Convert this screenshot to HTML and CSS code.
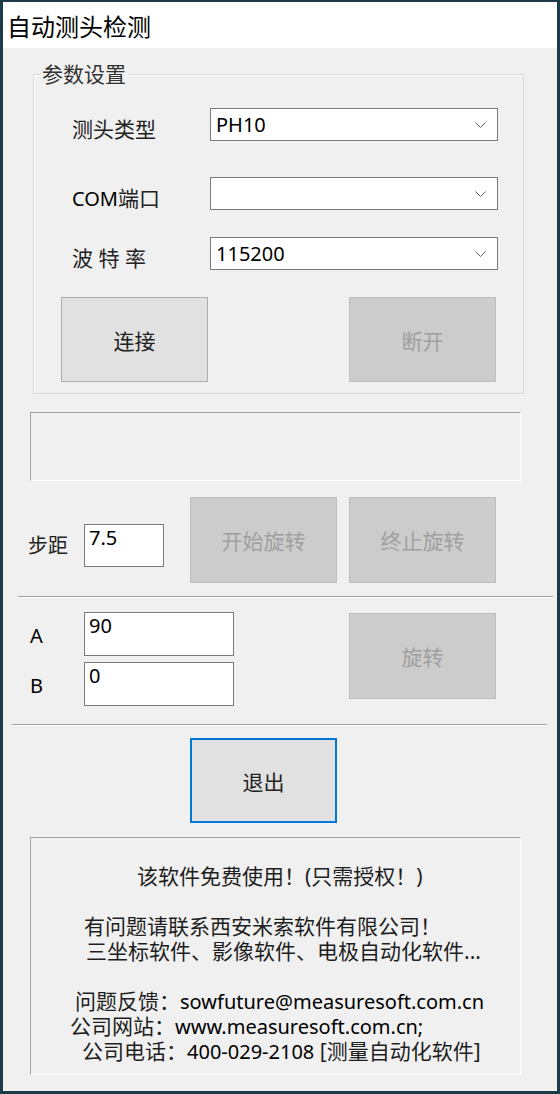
FILE: index.html
```html
<!DOCTYPE html>
<html lang="zh-CN">
<head>
    <meta charset="UTF-8">
    <meta name="viewport" content="width=device-width, initial-scale=1.0">
    <title>自动测头检测</title>
    <link rel="stylesheet" href="styles.css">
</head>
<body>
    <div class="window">
        <div class="titlebar">自动测头检测</div>

        <div class="client">
            <fieldset class="group">
                <legend>参数设置</legend>

                <div class="field-row row-type">
                    <label>测头类型</label>
                    <div class="combo">
                        <span>PH10</span>
                        <svg class="chevron" width="11" height="6" viewBox="0 0 11 6"><polyline points="0.5,0.5 5.5,5.5 10.5,0.5" /></svg>
                    </div>
                </div>

                <div class="field-row row-com">
                    <label><span class="latin">COM</span>端口</label>
                    <div class="combo">
                        <span></span>
                        <svg class="chevron" width="11" height="6" viewBox="0 0 11 6"><polyline points="0.5,0.5 5.5,5.5 10.5,0.5" /></svg>
                    </div>
                </div>

                <div class="field-row row-baud">
                    <label>波 特 率</label>
                    <div class="combo">
                        <span>115200</span>
                        <svg class="chevron" width="11" height="6" viewBox="0 0 11 6"><polyline points="0.5,0.5 5.5,5.5 10.5,0.5" /></svg>
                    </div>
                </div>

                <div class="btn-row">
                    <button class="btn" id="connectButton">连接</button>
                    <button class="btn btn-disconnect" id="disconnectButton" disabled>断开</button>
                </div>
            </fieldset>

            <div class="panel status-panel"></div>

            <div class="step-row">
                <label class="step-label">步距</label>
                <div class="textbox step-box">7.5</div>
                <button class="btn btn-start" disabled>开始旋转</button>
                <button class="btn btn-stop" disabled>终止旋转</button>
            </div>

            <hr class="sep sep-top">

            <div class="angle-row">
                <div class="angle-fields">
                    <div class="angle-field">
                        <label>A</label>
                        <div class="textbox angle-box">90</div>
                    </div>
                    <div class="angle-field">
                        <label>B</label>
                        <div class="textbox angle-box">0</div>
                    </div>
                </div>
                <button class="btn btn-rotate" disabled>旋转</button>
            </div>

            <hr class="sep sep-bottom">

            <button class="btn btn-default" id="exitButton">退出</button>

            <div class="panel info-panel">
                <div class="line l1">该软件免费使用！(只需授权！)</div>
                <div class="line blank"></div>
                <div class="line l2">有问题请联系西安米索软件有限公司！</div>
                <div class="line l3">三坐标软件、影像软件、电极自动化软件...</div>
                <div class="line blank"></div>
                <div class="line l5">问题反馈：<span class="latin">sowfuture@measuresoft.com.cn</span></div>
                <div class="line l6">公司网站：<span class="latin">www.measuresoft.com.cn;</span></div>
                <div class="line l7">公司电话：<span class="latin">400-029-2108</span> [测量自动化软件]</div>
            </div>
        </div>
    </div>
</body>
</html>
```

FILE: styles.css
```css
* {
    box-sizing: border-box;
}

body {
    margin: 0;
    padding: 0;
    background-color: #1c3c4a;
    font-family: "Noto Sans", "Noto Sans CJK SC", sans-serif;
    font-size: 21px;
    color: #222;
}

.window {
    width: 560px;
    height: 1094px;
    border-style: solid;
    border-color: #1c3c4a;
    border-width: 2px 3px 3px 3px;
    display: flex;
    flex-direction: column;
}

.titlebar {
    height: 46px;
    background-color: #fff;
    display: flex;
    align-items: center;
    padding-left: 4px;
    font-family: "Noto Sans CJK SC", sans-serif;
    font-size: 24px;
    color: #000;
}

.client {
    flex: 1;
    background-color: #f0f0f0;
    overflow: hidden;
}

.latin {
    font-size: 20px;
    color: #000;
}

/* 参数设置 */
.group {
    margin: 15px 0 0 30px;
    width: 491px;
    padding: 0;
    border: 1px solid #d9d9d9;
    box-shadow: inset 1px 1px 0 #fff;
}

.group legend {
    margin-left: 6px;
    padding: 0 2px;
    line-height: 22px;
    color: #333;
}

.field-row {
    display: flex;
    align-items: flex-start;
    margin-left: 38px;
}

.field-row label {
    width: 138px;
    margin-top: 10px;
    line-height: 22px;
}

.row-type {
    margin-top: 23px;
}

.row-com {
    margin-top: 36px;
}

.row-baud {
    margin-top: 27px;
}

.combo {
    width: 288px;
    height: 33px;
    background-color: #fff;
    border: 1px solid #7a7a7a;
    display: flex;
    align-items: center;
    justify-content: space-between;
    padding: 0 11px 0 5px;
    font-size: 20px;
    color: #000;
}

.chevron polyline {
    fill: none;
    stroke: #606060;
    stroke-width: 1;
}

.btn-row {
    display: flex;
    margin: 27px 0 11px 27px;
}

.btn {
    width: 147px;
    height: 85px;
    background-color: #e1e1e1;
    border: 1px solid #adadad;
    font-family: "Noto Sans CJK SC", sans-serif;
    font-size: 21px;
    color: #222;
    padding: 0;
    cursor: pointer;
}

.btn:disabled {
    background-color: #cccccc;
    border-color: #bfbfbf;
    color: #a0a0a0;
    cursor: default;
}

.btn-disconnect {
    margin-left: 141px;
}

.panel {
    width: 491px;
    margin-left: 27px;
    border-top: 1px solid #a0a0a0;
    border-left: 1px solid #a0a0a0;
    border-right: 1px solid #fff;
    border-bottom: 1px solid #fff;
}

.status-panel {
    margin-top: 18px;
    height: 69px;
}

/* 步距 */
.step-row {
    display: flex;
    align-items: flex-start;
    margin-top: 16px;
}

.step-label {
    width: 56px;
    margin: 38px 0 0 25px;
    line-height: 22px;
    font-size: 20px;
}

.textbox {
    background-color: #fff;
    border: 1px solid #7a7a7a;
    padding: 0 4px;
    line-height: 26px;
    font-size: 20px;
    color: #000;
}

.step-box {
    width: 80px;
    height: 43px;
    margin-top: 27px;
}

.btn-start {
    height: 86px;
    margin-left: 26px;
}

.btn-stop {
    height: 86px;
    margin-left: 12px;
}

.sep {
    width: 535px;
    height: 2px;
    margin: 0;
    border: none;
    border-top: 1px solid #a0a0a0;
    border-bottom: 1px solid #fff;
}

.sep-top {
    margin: 13px 0 0 15px;
}

.sep-bottom {
    margin: 18px 0 0 9px;
}

/* A / B */
.angle-row {
    display: flex;
    align-items: flex-start;
    margin-top: 14px;
}

.angle-fields {
    display: flex;
    flex-direction: column;
    gap: 6px;
}

.angle-field {
    display: flex;
    align-items: center;
}

.angle-field label {
    width: 54px;
    margin-left: 27px;
    padding-top: 2px;
    font-size: 20px;
    color: #000;
}

.angle-box {
    width: 150px;
    height: 44px;
}

.btn-rotate {
    height: 86px;
    margin: 1px 0 0 115px;
}

.btn-default {
    display: block;
    margin: 12px 0 0 187px;
    border: 2px solid #0078d7;
}

/* 说明 */
.info-panel {
    margin-top: 14px;
    height: 238px;
    padding-top: 26px;
}

.line {
    height: 25px;
    line-height: 25px;
    white-space: nowrap;
    color: #1e1e1e;
}

.l1 {
    padding-left: 106px;
}

.l2 {
    padding-left: 53px;
}

.l3 {
    padding-left: 55px;
}

.l5 {
    padding-left: 44px;
}

.l6 {
    padding-left: 39px;
}

.l7 {
    padding-left: 51px;
}
```
